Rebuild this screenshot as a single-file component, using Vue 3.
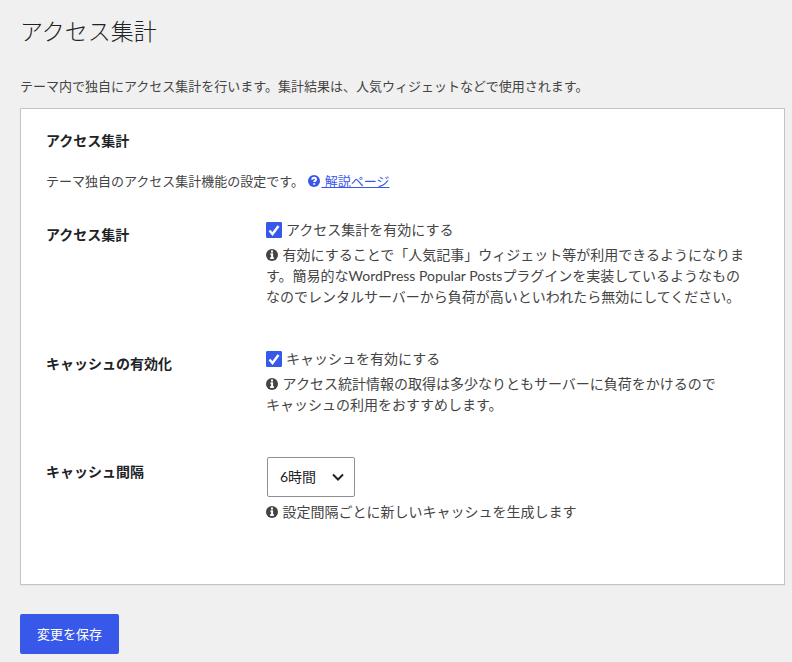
<script setup>
import { ref } from 'vue'

const analytics = ref(true)
const cache = ref(true)
const interval = ref('6')
</script>

<template>
  <main class="page">
    <h1>アクセス集計</h1>
    <p class="intro">テーマ内で独自にアクセス集計を行います。集計結果は、人気ウィジェットなどで使用されます。</p>
    <form @submit.prevent>
      <section class="card">
        <h2>アクセス集計</h2>
        <p class="lead">
          テーマ独自のアクセス集計機能の設定です。
          <a href="#help"><svg class="help" viewBox="0 0 12 12" aria-hidden="true"><circle cx="6" cy="6" r="6" /><path d="M4 4.600C4.200 3.400 5 2.800 6 2.800c1.200 0 2 .7 2 1.700 0 1.300-1.800 1.300-1.800 2.500M6.200 8.200v1.600" /></svg> 解説ページ</a>
        </p>
        <div class="row">
          <h3>アクセス集計</h3>
          <div class="field">
            <label class="check">
              <span class="box"><input v-model="analytics" type="checkbox" /><svg viewBox="0 0 16 16" aria-hidden="true"><path d="M3.500 8.500l3 3.500 6-8" /></svg></span>
              アクセス集計を有効にする
            </label>
            <p class="tip"><svg class="info" viewBox="0 0 12 12" aria-hidden="true"><circle cx="6" cy="6" r="6" /><path d="M6 1.600v2M4.500 5.300h1.600v3.600M4.200 9h3.600" /></svg> 有効にすることで「人気記事」ウィジェット等が利用できるようになります。簡易的なWordPress Popular Postsプラグインを実装しているようなものなのでレンタルサーバーから負荷が高いといわれたら無効にしてください。</p>
          </div>
        </div>
        <div class="row">
          <h3>キャッシュの有効化</h3>
          <div class="field">
            <label class="check">
              <span class="box"><input v-model="cache" type="checkbox" /><svg viewBox="0 0 16 16" aria-hidden="true"><path d="M3.500 8.500l3 3.500 6-8" /></svg></span>
              キャッシュを有効にする
            </label>
            <p class="tip"><svg class="info" viewBox="0 0 12 12" aria-hidden="true"><circle cx="6" cy="6" r="6" /><path d="M6 1.600v2M4.500 5.300h1.600v3.600M4.200 9h3.600" /></svg> アクセス統計情報の取得は多少なりともサーバーに負荷をかけるので<br />キャッシュの利用をおすすめします。</p>
          </div>
        </div>
        <div class="row">
          <h3><label for="interval">キャッシュ間隔</label></h3>
          <div class="field">
            <div class="select">
              <select id="interval" v-model="interval">
                <option value="6">6時間</option>
              </select>
              <svg viewBox="0 0 12 12" aria-hidden="true"><path d="M1 3.500l5 5 5-5" /></svg>
            </div>
            <p class="tip"><svg class="info" viewBox="0 0 12 12" aria-hidden="true"><circle cx="6" cy="6" r="6" /><path d="M6 1.600v2M4.500 5.300h1.600v3.600M4.200 9h3.600" /></svg> 設定間隔ごとに新しいキャッシュを生成します</p>
          </div>
        </div>
      </section>
      <button type="submit">変更を保存</button>
    </form>
  </main>
</template>

<style>
body {
  background: #f0f0f0;
}
</style>

<style scoped>
.page {
  padding: 14px 7px 8px 20px;
  color: #444;
  font: 13px/20px Lato, "Noto Sans CJK JP", sans-serif;
}
h1 {
  margin: 0;
  color: #1d2327;
  font-size: 23px;
  font-weight: 300;
  line-height: 34px;
}
p {
  margin: 0;
}
.intro {
  margin: 28px 0 12px;
}
.card {
  padding: 22px 25px 62px;
  border: 1px solid #c3c4c7;
  background: #fff;
  box-shadow: 0 1px 1px rgba(0, 0, 0, 0.04);
}
h2,
h3 {
  margin: 0;
  color: #1d2327;
  font-size: 14px;
  font-weight: 700;
  line-height: 20px;
}
.lead {
  margin: 20px 0 29px;
}
a {
  color: #3858e9;
}
.help,
.info {
  width: 12px;
  height: 12px;
  margin-right: 1px;
  vertical-align: -1px;
}
.help {
  margin-left: 1px;
}
circle {
  fill: currentColor;
}
.help path,
.info path {
  fill: none;
  stroke: #fff;
  stroke-width: 2;
}
.row {
  display: grid;
  grid-template-columns: 220px 1fr;
}
.row + .row {
  margin-top: 42px;
}
.row h3 {
  padding-top: 5px;
}
.field {
  max-width: 486px;
}
.check {
  display: flex;
  align-items: center;
  gap: 4px;
  height: 20px;
  font-size: 14px;
}
.box {
  display: grid;
  width: 16px;
  height: 16px;
}
.box > * {
  grid-area: 1 / 1;
}
.box input {
  width: 16px;
  height: 16px;
  margin: 0;
  border: 1px solid #8c8f94;
  border-radius: 1px;
  appearance: none;
  background: #fff;
}
.box input:checked {
  border-color: #3858e9;
  background: #3858e9;
}
.box svg {
  width: 16px;
  height: 16px;
  fill: none;
  stroke: #fff;
  stroke-width: 2.4;
  pointer-events: none;
}
.tip {
  margin-top: 4px;
  font-size: 14px;
  line-height: 21px;
}
.select {
  display: grid;
  width: 88px;
  margin: 0 1px 4px;
  align-items: center;
}
.select > * {
  grid-area: 1 / 1;
}
select {
  height: 40px;
  padding: 0 24px 0 12px;
  border: 1px solid #8c8f94;
  border-radius: 2px;
  appearance: none;
  background: #fff;
  color: #1d2327;
  font: inherit;
  font-size: 14px;
}
.select svg {
  width: 12px;
  height: 12px;
  margin-right: 11px;
  justify-self: end;
  fill: none;
  stroke: #1d2327;
  stroke-width: 2;
  pointer-events: none;
}
button {
  height: 40px;
  margin-top: 29px;
  padding: 0 17px;
  border: 0;
  border-radius: 2px;
  background: #3858e9;
  color: #fff;
  font: inherit;
}
</style>
